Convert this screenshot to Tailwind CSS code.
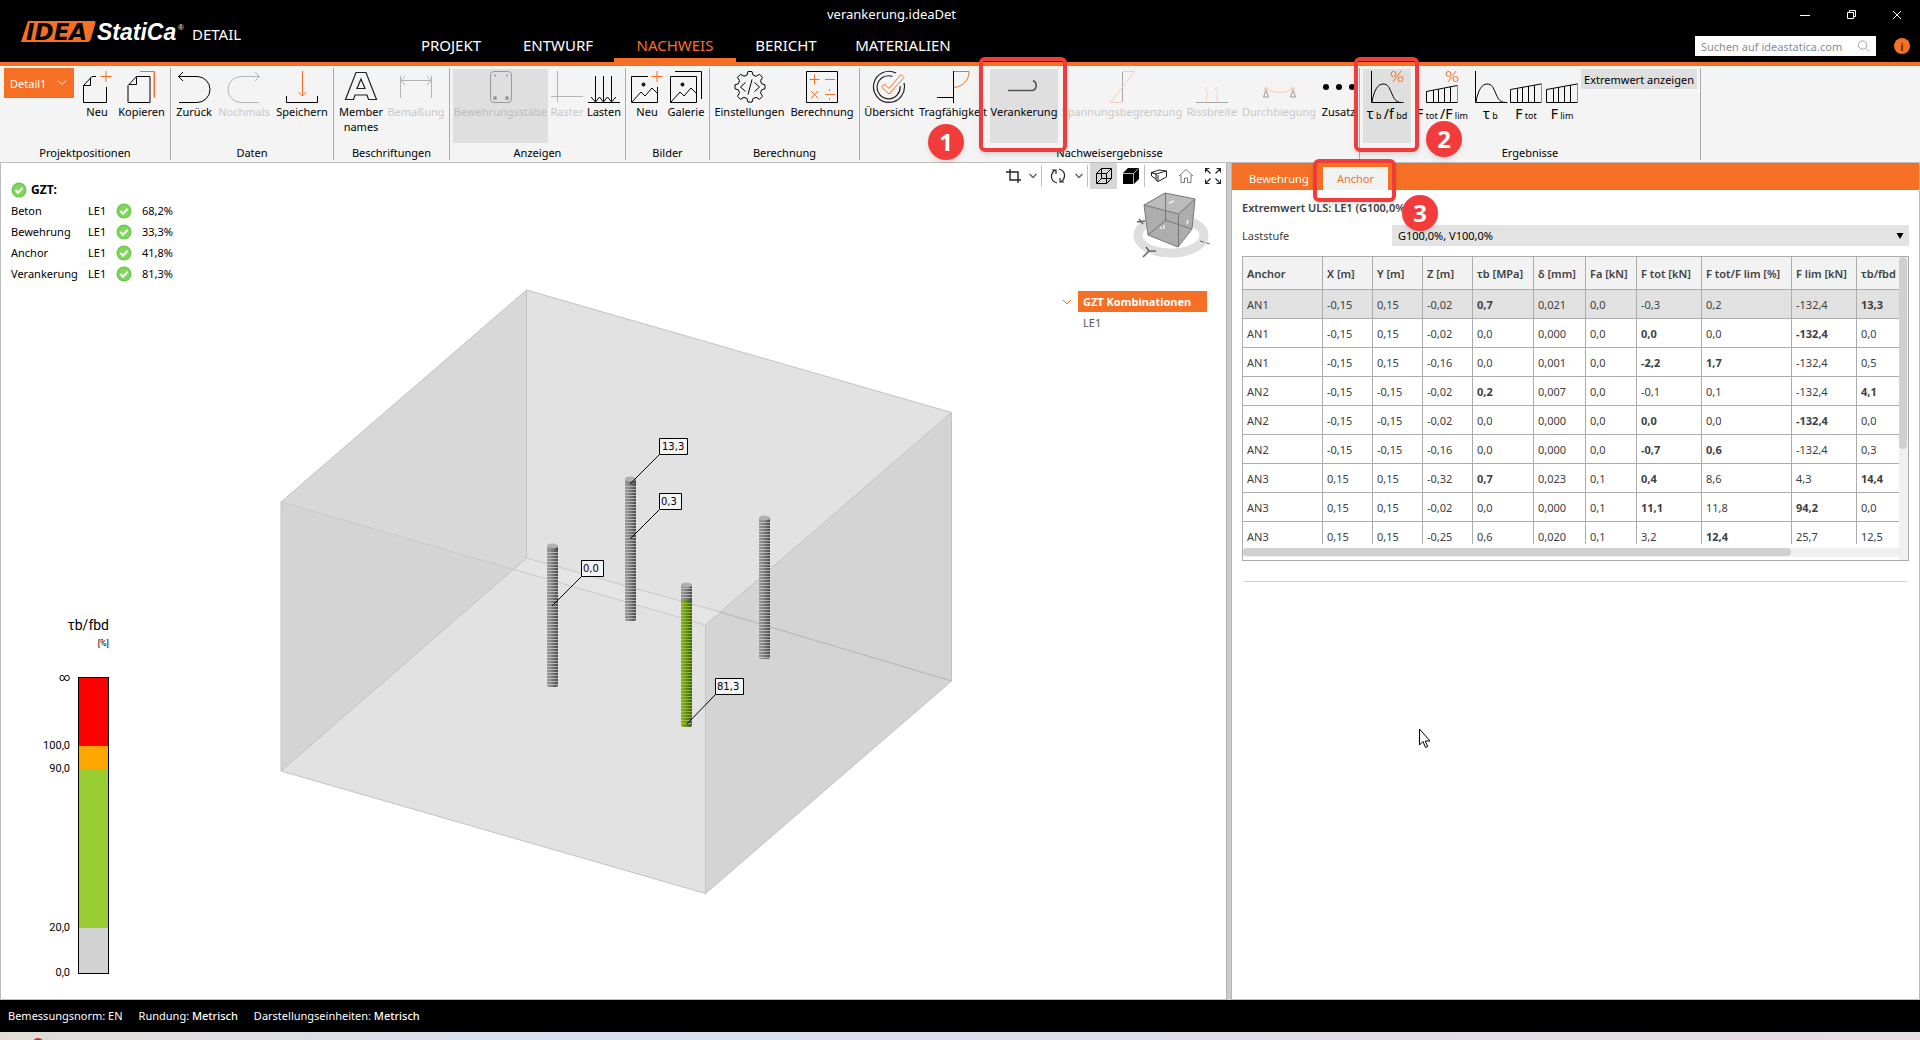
<!DOCTYPE html>
<html lang="de">
<head>
<meta charset="utf-8">
<title>verankerung.ideaDet</title>
<script src="https://cdn.jsdelivr.net/npm/@tailwindcss/browser@4"></script>
</head>
<body class="flex min-h-screen flex-col overflow-x-hidden bg-white font-['Noto_Sans','Open_Sans',sans-serif] text-[11px] leading-[15px] text-black">

<!-- Title bar -->
<header class="relative flex h-[66px] shrink-0 border-b-4 border-[#f57024] bg-black text-white">
  <div class="flex w-[400px] items-start pt-4 pl-5">
    <svg class="h-8 w-[168px]" viewBox="0 0 168 32">
      <path d="M8 5h66q2 0 1.500 2l-5 17q-1 2-3 2H1z" fill="#f57024"/>
      <text x="6" y="24" font-family="DejaVu Sans" font-weight="bold" font-style="italic" font-size="23" fill="#000">IDEA</text>
      <text x="77" y="24" font-family="Liberation Sans" font-weight="bold" font-style="italic" font-size="23" fill="#fff">StatiCa</text>
      <text x="158" y="14" font-family="Liberation Sans" font-size="8" fill="#fff">®</text>
    </svg>
    <span class="ml-1 pt-1.5 text-[15px] leading-6">DETAIL</span>
  </div>
  <nav class="flex items-stretch text-[15px] leading-6">
    <a href="#" class="w-[102px] pt-[33px] text-center">PROJEKT</a>
    <a href="#" class="w-[112px] pt-[33px] text-center">ENTWURF</a>
    <a href="#" class="w-[122px] border-b-4 border-[#f57024] pt-[33px] text-center text-[#f57024]">NACHWEIS</a>
    <a href="#" class="w-[100px] pt-[33px] text-center">BERICHT</a>
    <a href="#" class="w-[134px] pt-[33px] text-center">MATERIALIEN</a>
  </nav>
  <h1 class="absolute top-1.5 left-[827px] text-[13px] leading-4">verankerung.ideaDet</h1>
  <div class="ml-auto flex flex-col items-end">
    <div class="flex h-[30px] items-center gap-8 pr-4">
      <button aria-label="Minimieren"><svg class="h-3.5 w-3.5" viewBox="0 0 14 14" fill="none" stroke="#fff"><path d="M2 7.500h10"/></svg></button>
      <button aria-label="Wiederherstellen"><svg class="h-3.5 w-3.5" viewBox="0 0 14 14" fill="none" stroke="#fff"><path d="M3.500 4.500h6v6h-6zM5.500 4.500v-2h6v6h-2"/></svg></button>
      <button aria-label="Schließen"><svg class="h-3.5 w-3.5" viewBox="0 0 14 14" fill="none" stroke="#fff"><path d="M3 3l8 8M11 3l-8 8"/></svg></button>
    </div>
    <div class="flex items-center gap-[18px] pt-1.5 pr-[10px]">
      <label class="flex h-5 w-[181px] items-center bg-white px-1.5">
        <input type="text" aria-label="Suchen" placeholder="Suchen auf ideastatica.com" class="w-[152px] text-[11px] text-black outline-none placeholder:text-[#8c8c8c]">
        <svg class="ml-1 h-3.5 w-3.5" viewBox="0 0 14 14" fill="none" stroke="#999"><circle cx="6" cy="6" r="4.500"/><path d="M9.500 9.500L13 13"/></svg>
      </label>
      <button aria-label="Info" class="grid h-4 w-4 place-items-center rounded-full bg-[#f57024] text-[11px] font-bold text-[#5a2a10]">i</button>
    </div>
  </div>
</header>

<!-- Ribbon -->
<section class="z-10 flex h-[97px] shrink-0 border-b border-[#bdbdbd] bg-[#f4f4f4] py-0.5 [&_button]:flex [&_button]:shrink-0 [&_button]:flex-col [&_button]:items-center [&_button]:whitespace-nowrap [&_h2]:mt-auto [&_h2]:text-center [&>div]:flex [&>div]:shrink-0 [&>div]:flex-col [&>div]:border-r [&>div]:border-[#acacac]">
  <div class="w-[171px]">
    <div class="flex pl-1">
      <label class="relative h-[30px] w-[70px]">
        <select aria-label="Projektposition" class="h-full w-full appearance-none bg-[#f57024] pl-1.5 text-white"><option>Detail1</option></select>
        <svg class="pointer-events-none absolute top-2 right-1.5 h-3 w-3" viewBox="0 0 12 12" fill="none" stroke="#fff"><path d="M2 4.500l4 4 4-4"/></svg>
      </label>
      <button class="ml-0.5 w-[42px] pt-0.5">
        <svg class="h-[34px] w-[34px]" viewBox="0 0 34 34" fill="none" stroke="#000"><path d="M16 6.500h-4l-8.500 9v17h23V17M3.500 15.500h7v-8"/><path d="M26 1v11M20.500 6.500h11" stroke="#f57024"/></svg>Neu</button>
      <button class="w-[47px] pt-0.5">
        <svg class="h-[34px] w-[34px]" viewBox="0 0 34 34" fill="none" stroke="#000"><path d="M11.500 6.500h13.500v26h-22v-17zM4 14.500h7.500V7"/><path d="M15 1.500h14.500v26" stroke="#f57024"/><path d="M28.500 2v25" stroke="#f9b890"/></svg>Kopieren</button>
    </div>
    <h2>Projektpositionen</h2>
  </div>
  <div class="w-[163px]">
    <div class="flex pl-0.5">
      <button class="w-[42px] pt-0.5">
        <svg class="h-[34px] w-[34px]" viewBox="0 0 34 34" fill="none" stroke="#000"><path d="M6 2L1.500 6.500 6 11M1.500 6.500H20a13 13 0 0 1 0 26H2"/></svg>Zurück</button>
      <button disabled class="w-[58px] pt-0.5 text-[#c8c8c8]">
        <svg class="h-[34px] w-[34px]" viewBox="0 0 34 34" fill="none" stroke="#b4b4b4"><path d="M28 2l4.500 4.500L28 11M32.500 6.500H14a13 13 0 0 0 0 26h18"/></svg>Nochmals</button>
      <button class="w-[58px] pt-0.5">
        <svg class="h-[34px] w-[34px]" viewBox="0 0 34 34" fill="none" stroke="#000"><path d="M1.500 26v6.500h31V26"/><path d="M17.500 1v25M13.500 22l4 4 4-4" stroke="#f57024"/></svg>Speichern</button>
    </div>
    <h2>Daten</h2>
  </div>
  <div class="w-[116px]">
    <div class="flex pl-0.5">
      <button class="w-[50px] pt-0.5">
        <svg class="h-[34px] w-[34px]" viewBox="0 0 34 34" fill="none" stroke="#222" stroke-width="1.200"><path d="M12 2.500h10L32.500 29.500H24.500L23 25H11l-1.500 4.500H1.500zM17 9l-4 9.500h8z"/></svg>Member<br>names</button>
      <button disabled class="w-[60px] pt-0.5 text-[#c8c8c8]">
        <svg class="h-[34px] w-[34px]" viewBox="0 0 34 34" fill="none" stroke="#b4b4b4"><path d="M1.500 6v22M32.500 6v22M2 10.500h30M6 6l-4 4.500L6 15M28 6l4 4.500-4 4.500"/></svg>Bemaßung</button>
    </div>
    <h2>Beschriftungen</h2>
  </div>
  <div class="w-[176px]">
    <div class="flex pl-[3px]">
      <button disabled class="mt-px h-[74px] w-[95px] bg-[#dfdfdf] pt-px text-[#bdbdbd]">
        <svg class="h-[34px] w-[34px]" viewBox="0 0 34 34" fill="none" stroke="#999"><rect x="6.500" y="1.500" width="21" height="31" rx="3.500"/><g fill="#999" stroke="none"><circle cx="11" cy="5.500" r="1"/><circle cx="23" cy="5.500" r="1"/><circle cx="11" cy="28" r="2"/><circle cx="23" cy="28" r="2"/></g></svg>Bewehrungsstäbe</button>
      <button disabled class="ml-px w-9 pt-0.5 text-[#c8c8c8]">
        <svg class="h-[34px] w-[34px]" viewBox="0 0 34 34" fill="none" stroke="#b4b4b4"><path d="M7.500 1v31M1 26.500h32"/></svg>Raster</button>
      <button class="w-[38px] pt-0.5">
        <svg class="h-[34px] w-[34px]" viewBox="0 0 34 34" fill="none" stroke="#000"><path d="M8.500 6v25M16.500 6v25M24.500 6v25M4 27l4.500 5 4-5 4 5 4-5 4 5 4.500-5M1 32.500h32"/></svg>Lasten</button>
    </div>
    <h2>Anzeigen</h2>
  </div>
  <div class="w-[84px]">
    <div class="flex pl-0.5">
      <button class="w-[38px] pt-0.5">
        <svg class="h-[34px] w-[34px]" viewBox="0 0 34 34" fill="none" stroke="#000"><path d="M18 6.500H1.500v26h26V17M2 32l9-10 4 4 7-8 5 5"/><circle cx="13.500" cy="14.500" r="1.500" fill="#000"/><path d="M27 1v11M21.500 6.500h11" stroke="#f57024"/></svg>Neu</button>
      <button class="w-10 pt-0.5">
        <svg class="h-[34px] w-[34px]" viewBox="0 0 34 34" fill="none" stroke="#000"><path d="M1.500 6.500h26v26h-26zM2 32l9-10 4 4 7-8 5 5M6 1.500h26.500V29"/><circle cx="13.500" cy="14.500" r="1.500" fill="#000"/></svg>Galerie</button>
    </div>
    <h2>Bilder</h2>
  </div>
  <div class="w-[150px]">
    <div class="flex pl-0.5">
      <button class="w-[75px] pt-0.5">
        <svg class="h-[34px] w-[34px]" viewBox="0 0 34 34" fill="none" stroke="#000" stroke-linejoin="round"><path d="M14 5l1-3.500h4l1 3.500 3 1.300 3.500-2 3 3-2 3.500 1.200 3 3.300 1v4l-3.300 1-1.200 3 2 3.500-3 3-3.500-2-3 1.300-1 3.500h-4l-1-3.500-3-1.300-3.500 2-3-3 2-3.500-1.200-3-3.300-1v-4l3.300-1 1.200-3-2-3.500 3-3 3.500 2z"/><path d="M12.500 12.500l-5 4.500 5 4.500M21.500 12.500l5 4.500-5 4.500M19 9.500l-4 15"/></svg>Einstellungen</button>
      <button class="w-[70px] pt-0.5">
        <svg class="h-[34px] w-[34px]" viewBox="0 0 34 34" fill="none" stroke="#000"><path d="M1.500 1.500h31v31h-31z"/><g stroke="#f57024"><path d="M9.500 4.500v10M4.500 9.500h10M20 9.500h10M6 21l7 7M13 21l-7 7M20 24.500h10M24.500 19v2M24.500 28v2"/></g></svg>Berechnung</button>
    </div>
    <h2>Berechnung</h2>
  </div>
  <div class="w-[500px]">
    <div class="flex pl-0.5">
      <button class="w-[54px] pt-0.5">
        <svg class="h-[34px] w-[34px]" viewBox="0 0 34 34" fill="none" stroke="#222"><path d="M24 3A15.500 15.500 0 1 0 32 13M20.500 6.500A11.500 11.500 0 1 0 28 16" stroke-width="1.200"/><path d="M9.500 17l3-3 4.500 4.500L29 4.500l3 3L17 24z" stroke="#f57024"/></svg>Übersicht</button>
      <button class="w-[74px] pt-0.5">
        <svg class="h-[34px] w-[34px]" viewBox="0 0 34 34" fill="none" stroke="#000"><path d="M17.500 1v32M1 27.500h16"/><path d="M18 1.500h15c0 9-6 15-15 16" stroke="#f57024"/></svg>Tragfähigkeit</button>
      <span class="relative">
        <button class="mt-px h-[74px] w-[68px] bg-[#dfdfdf] pt-px">
          <svg class="h-[34px] w-[34px]" viewBox="0 0 34 34" fill="none" stroke="#555"><path d="M1 20.500h25a5.500 5.500 0 0 0 0-10" stroke-width="1.500"/></svg>Verankerung</button>
        <i class="pointer-events-none absolute -top-[11px] -left-[11px] z-10 h-[95px] w-[88px] rounded-md border-4 border-[#f23c3c] shadow-md"></i>
        <span class="pointer-events-none absolute top-14 -left-[62px] z-10 grid h-9 w-9 place-items-center rounded-full bg-[#f23c3c] text-2xl font-bold text-white shadow-md">1</span>
      </span>
      <button disabled class="ml-px w-[126px] pt-0.5 text-[#c8c8c8]">
        <svg class="h-[34px] w-[34px]" viewBox="0 0 34 34" fill="none" stroke="#a8a8a8"><path d="M17.500 1v31"/><path d="M17 1.500h12.500l-24 31H17" stroke="#f8cdb4"/></svg>Spannungsbegrenzung</button>
      <button disabled class="w-[54px] pt-0.5 text-[#c8c8c8]">
        <svg class="h-[34px] w-[34px]" viewBox="0 0 34 34" fill="none" stroke="#a8a8a8"><path d="M1 32.500h32"/><path d="M12.500 17c-4 4 2 5-1 9 -1 2 1 4 0 6M22 17c-4 4 3 5 0 9-1 2 1 4 0 6" stroke="#f8cdb4"/></svg>Rissbreite</button>
      <button disabled class="w-20 pt-0.5 text-[#c8c8c8]">
        <svg class="h-[34px] w-[34px]" viewBox="0 0 34 34" fill="none" stroke="#999"><path d="M4 20l-2.500 7h5zM31 20l-2.500 7h5z"/><path d="M4 19q13 7 27 0" stroke="#f8cdb4"/><circle cx="4" cy="19" r="1.500" fill="#f8cdb4" stroke="#f8cdb4"/><circle cx="31" cy="19" r="1.500" fill="#f8cdb4" stroke="#f8cdb4"/></svg>Durchbiegung</button>
      <button class="w-[39px] overflow-hidden pt-0.5">
        <svg class="h-[34px] w-[34px]" viewBox="0 0 34 34"><circle cx="4" cy="17" r="3"/><circle cx="17" cy="17" r="3"/><circle cx="30" cy="17" r="3"/></svg>Zusatz</button>
    </div>
    <h2>Nachweisergebnisse</h2>
  </div>
  <div class="w-[341px]">
    <div class="flex items-start pl-[3px] text-[9px] [&_big]:text-[14px] [&_button>span]:leading-5">
      <span class="relative">
        <button class="mt-px h-[74px] w-12 bg-[#dfdfdf] pt-px">
          <svg class="h-[34px] w-[34px]" viewBox="0 0 34 34" fill="none" stroke="#000"><path d="M1.500 1v31.500h32M2 32c2-12 6-18 11-18s6 3 9 10 5 8 9 8.500"/><g stroke="#f57024"><circle cx="23.500" cy="4" r="2.500"/><circle cx="30.500" cy="9" r="2.500"/><path d="M31 1l-8 11"/></g></svg>
          <span><big>τ</big> b <big>/f</big> bd</span></button>
        <i class="pointer-events-none absolute -top-[11px] -left-[9px] z-10 h-[95px] w-[65px] rounded-md border-4 border-[#f23c3c] shadow-md"></i>
        <span class="pointer-events-none absolute top-[53px] left-[63px] z-10 grid h-9 w-9 place-items-center rounded-full bg-[#f23c3c] text-2xl font-bold text-white shadow-md">2</span>
      </span>
      <button class="w-[62px] pt-0.5">
        <svg class="h-[34px] w-[34px]" viewBox="0 0 34 34" fill="none" stroke="#000"><path d="M32 15.500L1.500 21.500v11H32M8.500 20v12M13.500 19v13M19.500 18v14M25.500 17v15"/><g stroke="#f57024"><path d="M32.500 15v18M31 1l-8 11"/><circle cx="23.500" cy="4" r="2.500"/><circle cx="30.500" cy="9" r="2.500"/></g></svg>
        <span><big>F</big> tot <big>/F</big> lim</span></button>
      <button class="w-[35px] pt-0.5">
        <svg class="h-[34px] w-[34px]" viewBox="0 0 34 34" fill="none" stroke="#000"><path d="M1.500 1v31.500h32M2 32c2-12 6-18 11-18s6 3 9 10 5 8 9 8.500"/></svg>
        <span><big>τ</big> b</span></button>
      <button class="w-9 pt-0.5">
        <svg class="h-[34px] w-[34px]" viewBox="0 0 34 34" fill="none" stroke="#000"><path d="M32 14L1.500 19.500v13H32M8.500 18v14M13.500 17v15M19.500 16v16M25.500 15v17"/><path d="M32.500 13v20" stroke="#f57024"/></svg>
        <span><big>F</big> tot</span></button>
      <button class="w-9 pt-0.5">
        <svg class="h-[34px] w-[34px]" viewBox="0 0 34 34" fill="none" stroke="#000"><path d="M32 14L1.500 19.500v13H32M8.500 18v14M13.500 17v15M19.500 16v16M25.500 15v17"/><path d="M32.500 13v20" stroke="#f57024"/></svg>
        <span><big>F</big> lim</span></button>
      <button class="mt-px ml-px h-5 w-[116px] justify-center bg-[#dfdfdf] text-[11px]">Extremwert anzeigen</button>
    </div>
    <h2>Ergebnisse</h2>
  </div>
</section>

<main class="flex flex-1">
  <!-- 3D view -->
  <section class="relative min-w-0 flex-1 border-b border-l border-[#bdbdbd]">
    <svg class="absolute inset-0 h-full w-full" viewBox="1 163 1225 836">
      <defs>
        <linearGradient id="steel"><stop offset="0" stop-color="#9a9a9a"/><stop offset=".4" stop-color="#848484"/><stop offset="1" stop-color="#484848"/></linearGradient>
        <linearGradient id="green"><stop offset="0" stop-color="#8ab82a"/><stop offset=".4" stop-color="#6c9420"/><stop offset="1" stop-color="#3f5a18"/></linearGradient>
        <pattern id="rib" width="10" height="3" patternUnits="userSpaceOnUse"><path d="M0 .500h10" stroke="#d4d4d4" stroke-opacity=".7"/></pattern>
        <pattern id="ribg" width="10" height="3" patternUnits="userSpaceOnUse"><path d="M0 .500h10" stroke="#a8d840" stroke-opacity=".7"/></pattern>
      </defs>
      <path d="M526.500 290L951.500 412.500V681L705.500 893.500 281 771V502z" fill="#e2e2e2"/>
      <path d="M526.500 290L281 502V771L526.500 558z" fill="#d8d8d8"/>
      <path d="M281 502V771L513 570z" fill="#d4d4d4"/>
      <path d="M513 570l13.500-12 194 54-15 13z" fill="#e5e5e5"/>
      <path d="M705.500 625L951.500 412.500V681L705.500 893.500z" fill="#d4d4d4"/>
      <path d="M281 502L705.500 625M526.500 558L720 612" fill="none" stroke="#c8c8c8"/>
      <path d="M526.500 290L951.500 412.500V681L705.500 893.500 281 771V502zM526.500 290V558L281 771M705.500 893.500V625L951.500 412.500" fill="none" stroke="#c2c2c2"/>
      <path d="M720 612l231.500 69" stroke="#b4b4b4"/>
      <g fill="url(#steel)">
        <rect x="547" y="546" width="11" height="141" rx="2"/><rect x="625" y="479" width="11" height="142" rx="2"/><rect x="759" y="518" width="11" height="141" rx="2"/><rect x="681" y="585" width="11" height="18" rx="2"/>
      </g>
      <rect x="681" y="600" width="11" height="127" rx="2" fill="url(#green)"/>
      <g fill="url(#rib)">
        <rect x="547" y="552" width="11" height="135"/><rect x="625" y="485" width="11" height="136"/><rect x="759" y="522" width="11" height="137"/><rect x="681" y="588" width="11" height="12"/>
      </g>
      <rect x="681" y="602" width="11" height="122" fill="url(#ribg)"/>
      <g fill="#b0b0b0"><ellipse cx="552.500" cy="546" rx="5.500" ry="2.500"/><ellipse cx="630.500" cy="479" rx="5.500" ry="2.500"/><ellipse cx="764.500" cy="518" rx="5.500" ry="2.500"/><ellipse cx="686.500" cy="585" rx="5.500" ry="2.500"/></g>
      <path d="M659 455l-29 29M659 510l-29 29M581 577l-29 29M715 695l-28 29" stroke="#000"/>
      <g fill="#f4f4f4" stroke="#000"><path d="M659.500 438.500h28v16h-28zM659.500 493.500h22v16h-22zM581.500 560.500h22v16h-22zM715.500 678.500h28v16h-28z"/></g>
      <g font-family="DejaVu Sans" font-size="10" fill="#000"><text x="662" y="450">13,3</text><text x="661" y="505">0,3</text><text x="583" y="572">0,0</text><text x="717" y="690">81,3</text></g>
    </svg>

    <!-- Check summary -->
    <div class="absolute top-[17px] left-[10px] flex flex-col">
      <svg class="hidden"><symbol id="ok" viewBox="0 0 16 16"><circle cx="8" cy="8" r="7.500" fill="#6cc94c"/><circle cx="8" cy="8" r="6" fill="#7ed85e"/><path d="M4.500 8l2.500 2.800 4.700-5" fill="none" stroke="#fff" stroke-width="2"/></symbol></svg>
      <h3 class="flex h-5 items-center gap-1 text-xs font-bold"><svg class="h-4 w-4"><use href="#ok"/></svg>GZT:</h3>
      <table class="[&_td]:h-[21px] [&_td]:p-0">
        <tr><td class="w-[77px]">Beton</td><td class="w-7">LE1</td><td class="w-[26px]"><svg class="h-4 w-4"><use href="#ok"/></svg></td><td>68,2%</td></tr>
        <tr><td>Bewehrung</td><td>LE1</td><td><svg class="h-4 w-4"><use href="#ok"/></svg></td><td>33,3%</td></tr>
        <tr><td>Anchor</td><td>LE1</td><td><svg class="h-4 w-4"><use href="#ok"/></svg></td><td>41,8%</td></tr>
        <tr><td>Verankerung</td><td>LE1</td><td><svg class="h-4 w-4"><use href="#ok"/></svg></td><td>81,3%</td></tr>
      </table>
    </div>

    <!-- Colour scale -->
    <div class="absolute bottom-[25px] left-[35px] w-[73px] text-right font-['Roboto','Noto_Sans',sans-serif]">
      <p class="text-sm leading-5">τb/fbd</p>
      <p class="text-[9px] leading-4">[%]</p>
      <div class="mt-[26px] flex h-[297px] justify-end gap-2">
        <div class="-mt-[7px] flex flex-col [&>span]:shrink-0">
          <span class="h-[68px]">∞</span><span class="h-[23px]">100,0</span><span class="h-[159px]">90,0</span><span class="h-[45px]">20,0</span><span>0,0</span>
        </div>
        <div class="w-[31px] shrink-0 border border-black bg-[#d3d3d3]">
          <div class="h-[68px] bg-[#ff0000]"></div><div class="h-[23px] bg-[#ffa500]"></div><div class="h-[159px] bg-[#9acd32]"></div>
        </div>
      </div>
    </div>

    <!-- View tools -->
    <div class="absolute top-0 right-0 flex h-[26px] items-center [&>button]:grid [&>button]:h-[26px] [&>button]:w-[27px] [&>button]:place-items-center [&>i]:h-[22px] [&>i]:w-px [&>i]:bg-[#c0c0c0]">
      <button aria-label="Zuschneiden"><svg class="h-4 w-4" viewBox="0 0 16 16" fill="none" stroke="#222" stroke-width="1.400"><path d="M4 1v11h11M0 4h12v11"/></svg></button>
      <svg class="mr-1 ml-0.5 h-2 w-2" viewBox="0 0 8 8" fill="none" stroke="#666" stroke-width="1.500"><path d="M.500 2L4 5.500 7.500 2"/></svg><i></i>
      <button aria-label="Drehen" class="ml-0.5"><svg class="h-4 w-4" viewBox="0 0 16 16" fill="none" stroke="#222" stroke-width="1.200"><path d="M7 15C0 13 0 6 5 2M2 2h4v4M9 1c7 2 7 9 2 13M14 14h-4v-4"/></svg></button>
      <svg class="mr-1 ml-1 h-2 w-2" viewBox="0 0 8 8" fill="none" stroke="#666" stroke-width="1.500"><path d="M.500 2L4 5.500 7.500 2"/></svg><i></i>
      <button aria-label="Drahtmodell" class="ml-0.5 bg-[#d6d6d6]"><svg class="h-[18px] w-[18px]" viewBox="0 0 18 18" fill="none" stroke="#000"><path d="M1.500 6.500h10v10h-10zM1.500 6.500l5-5h10v10l-5 5M11.500 6.500l5-5M6.500 1.500v10h10M6.500 11.500l-5 5"/></svg></button>
      <button aria-label="Vollmodell"><svg class="h-[18px] w-[18px]" viewBox="0 0 18 18"><path d="M1 6l5-5h11v11l-5 5H1z"/><path d="M1 6.500h10.500V17M11.500 6.500l5-5" fill="none" stroke="#fff" stroke-width=".7"/></svg></button><i></i>
      <button aria-label="Perspektive"><svg class="h-4 w-4" viewBox="0 0 16 16" fill="none" stroke="#222"><path d="M.500 4.500L8 2l7.500 1v6L7 13.500l-2-1.500V6zM.500 4.500V8L5 11M.500 4.500L5 6l10.500-3M7 7v6.500"/></svg></button>
      <button aria-label="Startansicht"><svg class="h-4 w-4" viewBox="0 0 16 16" fill="none" stroke="#777"><path d="M1 8l7-6.500L15 8M3 7v7.500h3.500V10h3v4.500H13V7"/></svg></button>
      <button aria-label="Vollbild"><svg class="h-4 w-4" viewBox="0 0 16 16" fill="none" stroke="#222" stroke-width="1.200"><path d="M.500 4.500v-4h4M.500.500l5 5M11.500.500h4v4M15.500.500l-5 5M.500 11.500v4h4M.500 15.500l5-5M11.500 15.500h4v-4M15.500 15.500l-5-5"/></svg></button>
    </div>

    <!-- Orientation cube -->
    <svg class="absolute top-[26px] right-[14px] h-20 w-20" viewBox="1132 189 80 80">
      <ellipse cx="1171" cy="235.500" rx="33" ry="17.500" fill="none" stroke="#dedede" stroke-width="9"/>
      <path d="M1144 205l21-12 30 6-3 30-14 18-30-12z" fill="#adadad"/>
      <path d="M1144 205l21-12 30 6-17 15z" fill="#bbb"/>
      <path d="M1144 205l21-12 30 6-3 30-14 18-30-12zM1144 205l34.500 9 16.500-15M1178.500 214v33M1165.500 193v27l26 9M1166 220l-18 15" fill="none" stroke="#777"/>
      <g fill="none" stroke="#666" stroke-width="1.500"><path d="M1137 222l8-1M1139 219l4 5M1143 257l6-6M1149 251h7M1149 251l-3-4"/><path d="M1200 241l10 3" stroke-dasharray="4 2" stroke-width="1"/></g>
      <g stroke="#eee" stroke-width="1.500"><path d="M1169 203l5-2M1160 227l2 2M1164 225v4M1188 220l-1 4"/></g>
    </svg>

    <!-- Combination tree -->
    <div class="absolute top-32 right-[19px] flex gap-1.5">
      <svg class="mt-1.5 h-2.5 w-2.5" viewBox="0 0 10 10" fill="none" stroke="#f57024"><path d="M1 3l4 4 4-4"/></svg>
      <div class="w-[129px]">
        <p class="bg-[#f57024] px-[5px] leading-[21px] font-bold text-white">GZT Kombinationen</p>
        <p class="px-[5px] leading-[21px] text-[#555]">LE1</p>
      </div>
    </div>
  </section>

  <div class="w-1.5 shrink-0 cursor-col-resize border-x border-[#b4b4b4] bg-[#cbcbcb]"></div>

  <!-- Result table panel -->
  <section class="relative w-[688px] shrink-0 border-r border-b border-[#bdbdbd] text-[#404040]">
    <div class="flex h-[27px] items-end bg-[#f57024]">
      <button class="h-[23px] w-[91px] pl-[17px] text-left text-white">Bewehrung</button>
      <span class="relative">
        <button class="h-[23px] w-[65px] bg-[#f2f2f2] text-[#f57024]">Anchor</button>
        <i class="pointer-events-none absolute -top-2 -left-[10px] z-20 h-[43px] w-[83px] rounded-md border-4 border-[#f23c3c] shadow-md"></i>
        <span class="pointer-events-none absolute top-7 left-[79px] z-20 grid h-9 w-9 place-items-center rounded-full bg-[#f23c3c] text-2xl font-bold text-white shadow-md">3</span>
      </span>
    </div>
    <div class="px-[10px] pt-[10px]">
      <h3 class="font-semibold">Extremwert ULS: LE1 (G100,0%)</h3>
      <div class="mt-[10px] flex items-center">
        <label for="step" class="w-[150px]">Laststufe</label>
        <div class="relative flex-1">
          <select id="step" class="h-[21px] w-full appearance-none bg-[#e3e3e3] pl-1.5 text-black"><option>G100,0%, V100,0%</option></select>
          <svg class="pointer-events-none absolute top-[7px] right-[5px] h-2 w-2" viewBox="0 0 8 8"><path d="M.500 1h7L4 7z"/></svg>
        </div>
      </div>
      <div class="mt-[10px] flex h-[305px] border border-[#acacac]">
        <div class="flex min-w-0 flex-1 flex-col">
          <div class="h-[287px] overflow-hidden">
            <table class="w-[704px] table-fixed border-separate border-spacing-0 text-left whitespace-nowrap [&_td]:h-[29px] [&_td]:border-r [&_td]:border-b [&_td]:border-[#acacac] [&_td]:p-0 [&_td]:pl-1 [&_th]:h-[33px] [&_th]:border-r [&_th]:border-b [&_th]:border-[#acacac] [&_th]:bg-[#f2f2f2] [&_th]:p-0 [&_th]:pl-1 [&_th]:font-semibold">
              <colgroup><col class="w-[80px]"><col class="w-[50px]"><col class="w-[50px]"><col class="w-[50px]"><col class="w-[61px]"><col class="w-[52px]"><col class="w-[51px]"><col class="w-[65px]"><col class="w-[90px]"><col class="w-[65px]"><col class="w-[90px]"></colgroup>
              <thead><tr><th>Anchor</th><th>X [m]</th><th>Y [m]</th><th>Z [m]</th><th>τb [MPa]</th><th>δ [mm]</th><th>Fa [kN]</th><th>F tot [kN]</th><th>F tot/F lim [%]</th><th>F lim [kN]</th><th>τb/fbd</th></tr></thead>
              <tbody>
                <tr class="bg-[#e1e1e1]"><td>AN1</td><td>-0,15</td><td>0,15</td><td>-0,02</td><td><b>0,7</b></td><td>0,021</td><td>0,0</td><td>-0,3</td><td>0,2</td><td>-132,4</td><td><b>13,3</b></td></tr>
                <tr><td>AN1</td><td>-0,15</td><td>0,15</td><td>-0,02</td><td>0,0</td><td>0,000</td><td>0,0</td><td><b>0,0</b></td><td>0,0</td><td><b>-132,4</b></td><td>0,0</td></tr>
                <tr><td>AN1</td><td>-0,15</td><td>0,15</td><td>-0,16</td><td>0,0</td><td>0,001</td><td>0,0</td><td><b>-2,2</b></td><td><b>1,7</b></td><td>-132,4</td><td>0,5</td></tr>
                <tr><td>AN2</td><td>-0,15</td><td>-0,15</td><td>-0,02</td><td><b>0,2</b></td><td>0,007</td><td>0,0</td><td>-0,1</td><td>0,1</td><td>-132,4</td><td><b>4,1</b></td></tr>
                <tr><td>AN2</td><td>-0,15</td><td>-0,15</td><td>-0,02</td><td>0,0</td><td>0,000</td><td>0,0</td><td><b>0,0</b></td><td>0,0</td><td><b>-132,4</b></td><td>0,0</td></tr>
                <tr><td>AN2</td><td>-0,15</td><td>-0,15</td><td>-0,16</td><td>0,0</td><td>0,000</td><td>0,0</td><td><b>-0,7</b></td><td><b>0,6</b></td><td>-132,4</td><td>0,3</td></tr>
                <tr><td>AN3</td><td>0,15</td><td>0,15</td><td>-0,32</td><td><b>0,7</b></td><td>0,023</td><td>0,1</td><td><b>0,4</b></td><td>8,6</td><td>4,3</td><td><b>14,4</b></td></tr>
                <tr><td>AN3</td><td>0,15</td><td>0,15</td><td>-0,02</td><td>0,0</td><td>0,000</td><td>0,1</td><td><b>11,1</b></td><td>11,8</td><td><b>94,2</b></td><td>0,0</td></tr>
                <tr><td>AN3</td><td>0,15</td><td>0,15</td><td>-0,25</td><td>0,6</td><td>0,020</td><td>0,1</td><td>3,2</td><td><b>12,4</b></td><td>25,7</td><td>12,5</td></tr>
              </tbody>
            </table>
          </div>
          <div class="mt-1 h-[9px] bg-[#f0f0f0]"><div class="h-2 w-[548px] rounded-sm bg-[#d0d0d0]"></div></div>
        </div>
        <div class="w-[9px] bg-[#f0f0f0]"><div class="h-48 w-2 rounded-sm bg-[#d0d0d0]"></div></div>
      </div>
      <hr class="mx-0.5 mt-5 border-[#d0d0d0]">
    </div>
    <svg class="absolute top-[565px] left-[186px] h-[22px] w-3.5" viewBox="0 0 14 22" fill="#fff" stroke="#000"><path d="M1.500 1v16l3.500-3.500 2.500 6 2.200-1-2.400-5.500H12z"/></svg>
  </section>
</main>

<footer class="flex h-8 shrink-0 items-center gap-4 bg-black pb-0.5 pl-2 text-white">
  <span>Bemessungsnorm: EN</span><span>Rundung: <span class="font-medium">Metrisch</span></span><span>Darstellungseinheiten: <span class="font-medium">Metrisch</span></span>
</footer>
<div class="h-2 shrink-0 overflow-hidden bg-linear-to-r from-[#e3dcd6] via-[#d6def0] via-30% to-[#e8dde2]"><div class="mt-1.5 ml-8 h-3 w-3 rounded-full bg-[#c03028]"></div></div>
</body>
</html>
